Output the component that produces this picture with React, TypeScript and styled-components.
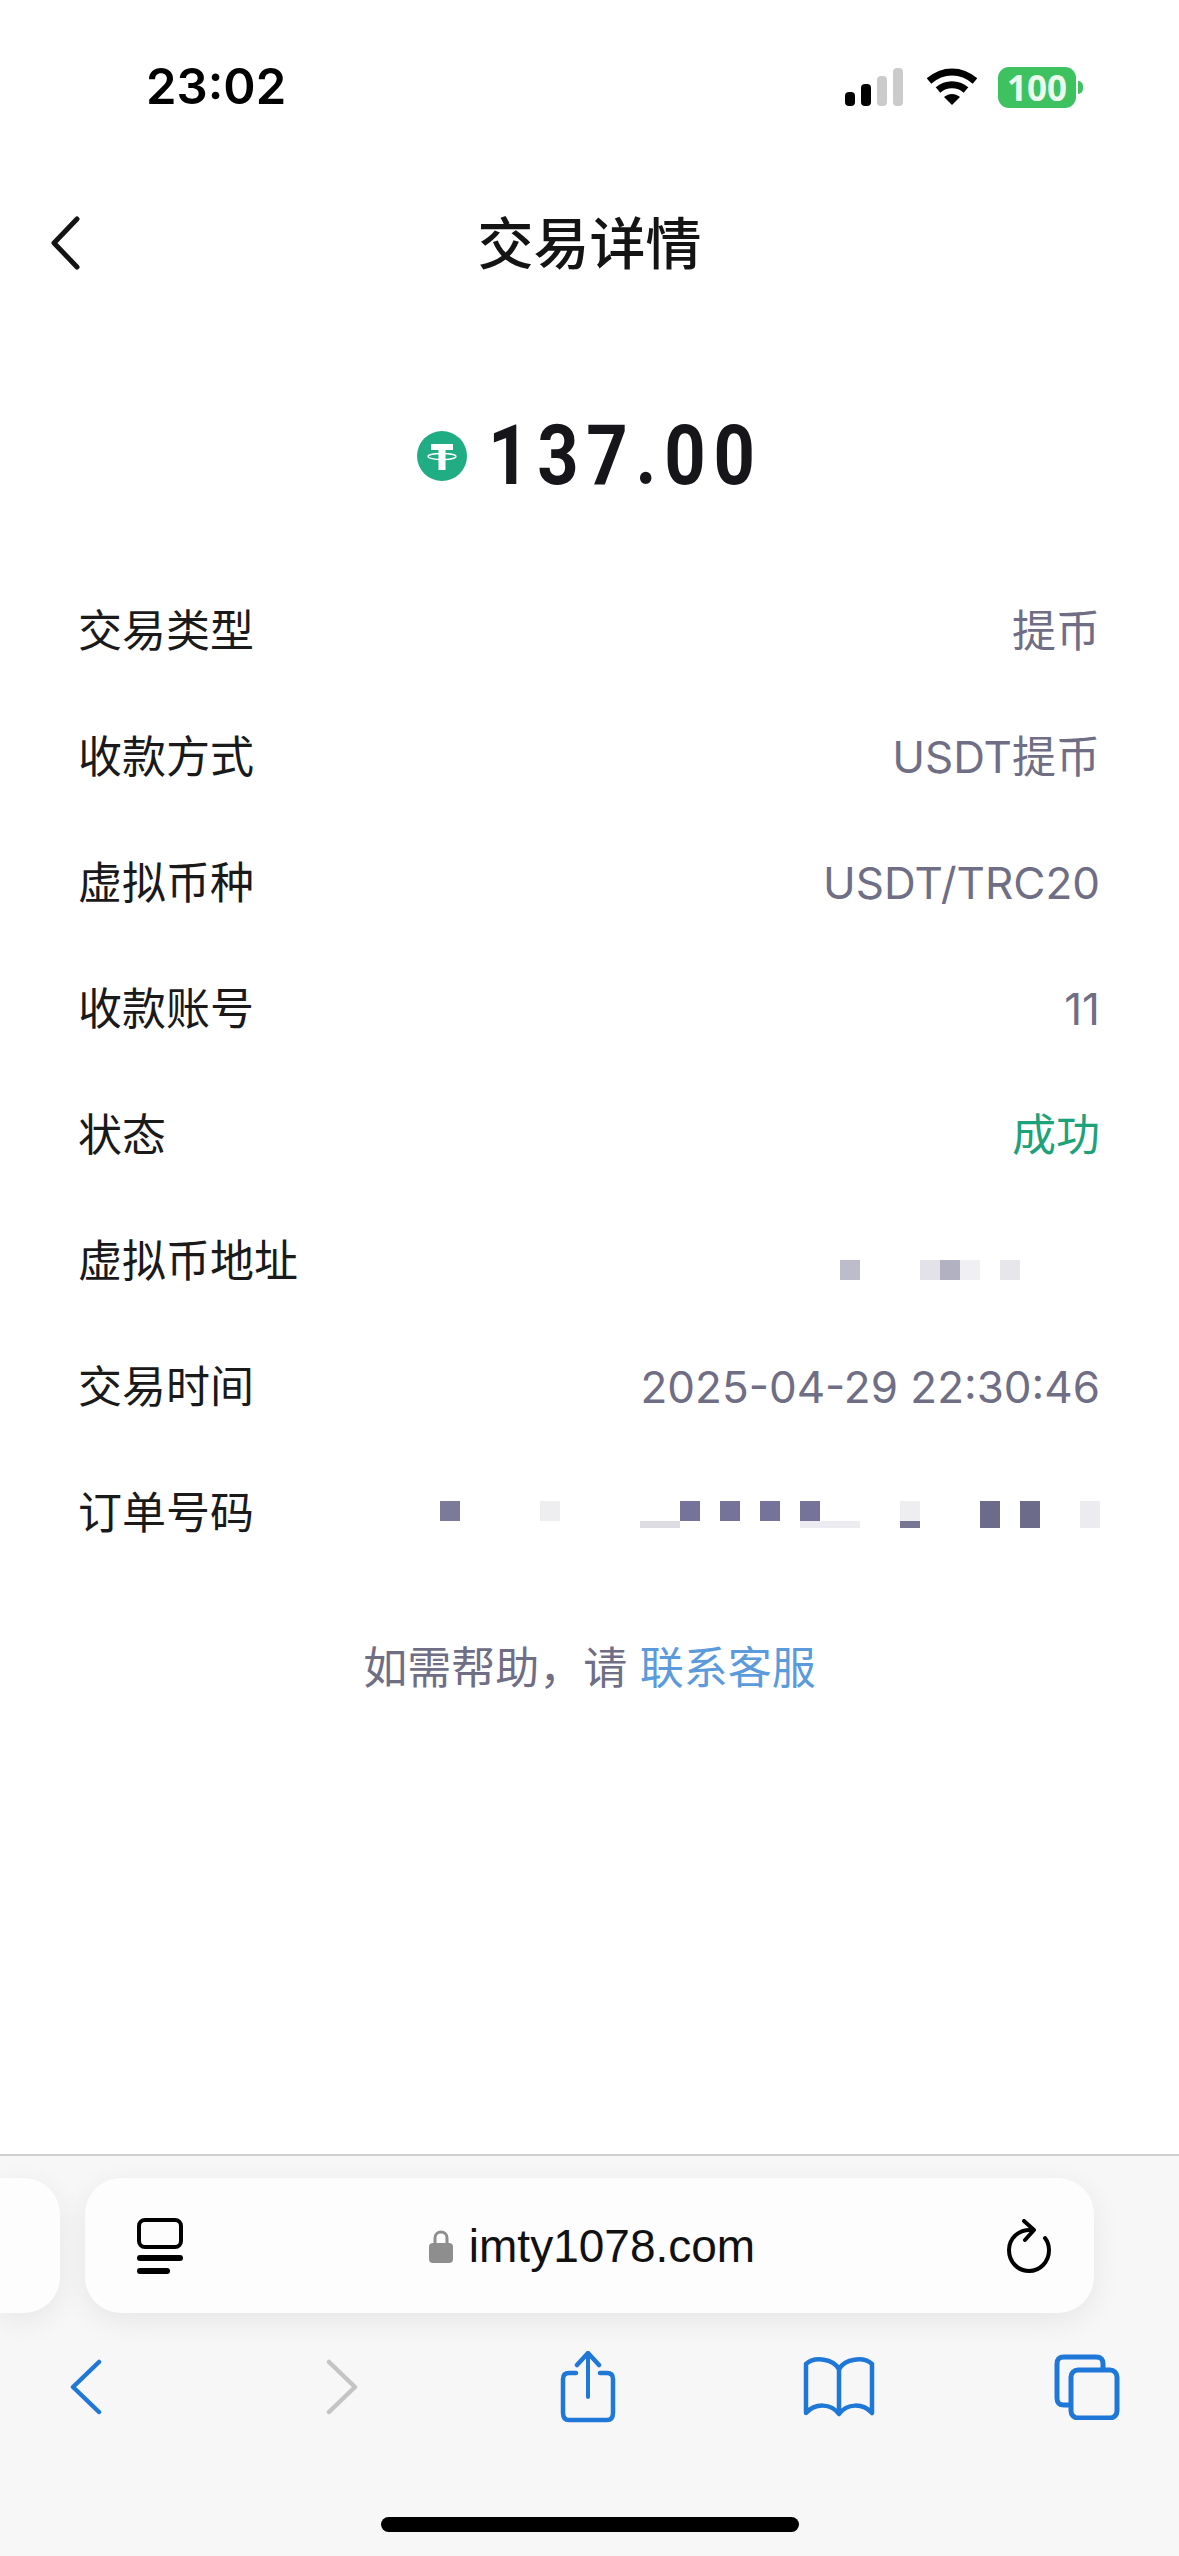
import React from 'react';
import styled, { createGlobalStyle } from 'styled-components';

const GlobalStyle = createGlobalStyle`
  html, body {
    margin: 0;
    padding: 0;
    background: #ffffff;
  }
  * {
    box-sizing: border-box;
  }
`;

const CJK = `Inter, "Noto Sans CJK SC", sans-serif`;

const Page = styled.div`
  width: 1179px;
  height: 2556px;
  display: flex;
  flex-direction: column;
  background: #ffffff;
  font-family: ${CJK};
  overflow: hidden;
`;

const StatusBar = styled.div`
  height: 193px;
  padding: 60px 103px 0 146px;
  display: flex;
  justify-content: space-between;
  align-items: flex-start;
`;

const Time = styled.span`
  font-size: 49px;
  line-height: 54px;
  font-weight: 600;
  color: #000000;
`;

const StatusIcons = styled.div`
  display: flex;
  align-items: center;
  gap: 20px;
  height: 54px;
`;

const Battery = styled.div`
  position: relative;
  width: 78px;
  height: 41px;
  border-radius: 11px;
  background: #3ec15f;
  color: #eafbee;
  font-size: 35px;
  line-height: 41px;
  font-weight: 700;
  font-family: "Open Sans", sans-serif;
  text-align: center;

  &::after {
    content: '';
    position: absolute;
    right: -7px;
    top: 14px;
    width: 5px;
    height: 13px;
    border-radius: 0 6px 6px 0;
    background: #3ec15f;
  }
`;

const Header = styled.header`
  height: 100px;
  display: grid;
  grid-template-columns: 1fr auto 1fr;
  align-items: center;
  padding: 0 50px;
`;

const Title = styled.h1`
  margin: 2px 0 0;
  font-size: 56px;
  line-height: 98px;
  font-weight: 500;
  color: #141414;
`;

const Amount = styled.div`
  height: 275px;
  padding-top: 51px;
  display: flex;
  align-items: center;
  justify-content: center;
  gap: 21px;
`;

// digits in the reference are narrower than Roboto, with wide tracking
const AmountValue = styled.span`
  display: inline-block;
  font-family: Roboto, sans-serif;
  font-size: 84px;
  line-height: 90px;
  font-weight: 700;
  letter-spacing: 9px;
  color: #15151a;
  transform: scaleX(0.86);
  transform-origin: left center;
  margin-right: -46px;
`;

const Rows = styled.div`
  display: flex;
  flex-direction: column;
  padding: 0 79px 0 78px;
`;

const Row = styled.div`
  height: 126px;
  display: flex;
  align-items: center;
  justify-content: space-between;
`;

const Label = styled.span`
  font-size: 44px;
  line-height: 56px;
  color: #1a1a1a;
`;

const Value = styled.span<{ $success?: boolean }>`
  font-size: 44px;
  line-height: 56px;
  color: ${({ $success }) => ($success ? '#1ea27a' : '#6f6e85')};
`;

const Mosaic = styled.div<{ $cols: number; $offset: number }>`
  display: grid;
  grid-template-columns: repeat(${({ $cols }) => $cols}, 20px);
  grid-template-rows: 20px 7px;
  margin-top: ${({ $offset }) => $offset}px;
`;

const MosaicCell = styled.span<{ $col: number; $row: number; $span?: number; $tall?: boolean; $color: string }>`
  grid-column: ${({ $col, $span }) => `${$col} / span ${$span ?? 1}`};
  grid-row: ${({ $row, $tall }) => `${$row} / span ${$tall ? 2 : 1}`};
  background: ${({ $color }) => $color};
`;

const HelpLine = styled.p`
  margin: 61px 0 0;
  text-align: center;
  font-size: 44px;
  line-height: 62px;
  color: #6f6e85;
`;

const HelpLink = styled.span`
  color: #5b9bdc;
`;

const Spacer = styled.div`
  flex: 1;
`;

const BrowserBar = styled.footer`
  height: 402px;
  background: #f7f7f8;
  border-top: 2px solid #cfcfd1;
  display: flex;
  flex-direction: column;
  padding-top: 22px;
`;

const PillRow = styled.div`
  display: flex;
  gap: 25px;
  height: 135px;
`;

const SidePill = styled.div`
  width: 60px;
  background: #fdfdfe;
  border-radius: 0 36px 36px 0;
  box-shadow: 0 8px 30px rgba(0, 0, 0, 0.07);
`;

const UrlPill = styled.div`
  width: 1009px;
  background: #fdfdfe;
  border-radius: 36px;
  box-shadow: 0 8px 30px rgba(0, 0, 0, 0.07);
  display: grid;
  grid-template-columns: 1fr auto 1fr;
  align-items: center;
  padding: 0 43px 0 52px;
`;

const PillStart = styled.div`
  display: flex;
  justify-content: flex-start;
`;

const PillEnd = styled.div`
  display: flex;
  justify-content: flex-end;
`;

const Address = styled.div`
  display: flex;
  align-items: center;
  gap: 16px;
  margin-right: 4px;
`;

const Domain = styled.span`
  font-family: "Liberation Sans", sans-serif;
  font-size: 46px;
  line-height: 60px;
  color: #111111;
`;

const Toolbar = styled.nav`
  height: 94px;
  margin-top: 27px;
  display: grid;
  grid-template-columns: 171px 342px 150px 352px 144px;
  align-items: center;
  justify-items: center;
`;

const HomeIndicator = styled.div`
  width: 418px;
  height: 15px;
  margin: 83px auto 0;
  border-radius: 8px;
  background: #000000;
`;

const BLUE = '#1f78d8';

const SignalIcon = () => (
  <svg width="62" height="38" viewBox="0 0 62 38">
    <rect x="1" y="24" width="10" height="14" rx="4" fill="#000" />
    <rect x="17" y="16" width="10" height="22" rx="4" fill="#000" />
    <rect x="33" y="8" width="10" height="30" rx="4" fill="#cbcbcb" />
    <rect x="49" y="0" width="10" height="38" rx="4" fill="#cbcbcb" />
  </svg>
);

const WifiIcon = () => (
  <svg width="52" height="38" viewBox="0 0 52 38">
    <path d="M3 13 C17 1 35 1 49 13" fill="none" stroke="#000" strokeWidth="7" />
    <path d="M12 22 C20 15 32 15 40 22" fill="none" stroke="#000" strokeWidth="7" />
    <path d="M18 29 C23 25 29 25 34 29 L26 37 Z" fill="#000" />
  </svg>
);

const TetherIcon = () => (
  <svg width="50" height="50" viewBox="0 0 50 50">
    <circle cx="25" cy="25" r="25" fill="#21ad84" />
    <path d="M14 13 H36 V19 H28.5 V39 H21.5 V19 H14 Z" fill="#fff" />
    <ellipse cx="25" cy="25.5" rx="14" ry="3" fill="none" stroke="#fff" strokeWidth="1.3" />
  </svg>
);

const BackIcon = () => (
  <svg width="30" height="54" viewBox="0 0 30 54">
    <path d="M27 3 L4 27 L27 51" fill="none" stroke="#141414" strokeWidth="5" strokeLinecap="round" strokeLinejoin="round" />
  </svg>
);

const TabGroupIcon = () => (
  <svg width="46" height="56" viewBox="0 0 46 56" fill="none" stroke="#000" strokeLinecap="round">
    <rect x="2" y="2" width="42" height="27" rx="6" strokeWidth="4" />
    <path d="M3 40 H43" strokeWidth="6" />
    <path d="M3 53 H30" strokeWidth="6" />
  </svg>
);

const LockIcon = () => (
  <svg width="24" height="34" viewBox="0 0 24 34">
    <path d="M6 16 V9 C6 1 18 1 18 9 V16" fill="none" stroke="#8e8e8e" strokeWidth="3" />
    <rect x="0" y="14" width="24" height="20" rx="4" fill="#8e8e8e" />
  </svg>
);

const ReloadIcon = () => (
  <svg width="44" height="54" viewBox="0 0 44 54" fill="none" stroke="#000" strokeWidth="4" strokeLinecap="round" strokeLinejoin="round">
    <path d="M25 11 C11 10 2 20 2 31 C2 43 11 52 22 52 C33 52 42 43 42 31 C42 26 41 23 38 19" />
    <path d="M17 2 L27 11 L18 21" />
  </svg>
);

const ToolbarBack = ({ color }: { color: string }) => (
  <svg width="32" height="56" viewBox="0 0 32 56">
    <path d="M29 3 L3 28 L29 53" fill="none" stroke={color} strokeWidth="4.5" strokeLinecap="round" strokeLinejoin="round" />
  </svg>
);

const ToolbarForward = ({ color }: { color: string }) => (
  <svg width="32" height="56" viewBox="0 0 32 56">
    <path d="M3 3 L29 28 L3 53" fill="none" stroke={color} strokeWidth="4.5" strokeLinecap="round" strokeLinejoin="round" />
  </svg>
);

const ShareIcon = () => (
  <svg width="56" height="72" viewBox="0 0 56 72" fill="none" stroke={BLUE} strokeWidth="4.5" strokeLinecap="round" strokeLinejoin="round">
    <path d="M16 22 H9 C5 22 3 24 3 28 V62 C3 67 5 69 9 69 H47 C51 69 53 67 53 62 V28 C53 24 51 22 47 22 H40" />
    <path d="M28 46 V3" strokeWidth="4" />
    <path d="M17 14 L28 2 L39 14" />
  </svg>
);

const BookIcon = () => (
  <svg width="72" height="60" viewBox="0 0 72 60" fill="none" stroke={BLUE} strokeWidth="4.5" strokeLinecap="round" strokeLinejoin="round">
    <path d="M36 12 C30 2 12 -1 3 7 V56 C12 46 28 46 36 57 C44 46 60 46 69 56 V7 C60 -1 42 2 36 12 Z" />
    <path d="M36 12 V54" />
  </svg>
);

const TabsIcon = () => (
  <svg width="66" height="66" viewBox="0 0 66 66" fill="none" stroke={BLUE} strokeWidth="5" strokeLinejoin="round">
    <path d="M15 51 H10 C5 51 3 49 3 44 V10 C3 5 5 3 10 3 H42 C47 3 49 5 49 10 V16" />
    <rect x="17" y="16" width="46" height="48" rx="7" />
  </svg>
);

interface CellData {
  col: number;
  row: number;
  span?: number;
  tall?: boolean;
  color: string;
}

const addressCells: CellData[] = [
  { col: 1, row: 1, color: '#bdbccb' },
  { col: 5, row: 1, color: '#e2e2e8' },
  { col: 6, row: 1, color: '#b2b1c2' },
  { col: 7, row: 1, color: '#f0f0f3' },
  { col: 9, row: 1, color: '#e6e6eb' },
];

const orderCells: CellData[] = [
  { col: 1, row: 1, color: '#7c7a99' },
  { col: 6, row: 1, color: '#eeeef1' },
  { col: 11, row: 2, span: 2, color: '#dcdce2' },
  { col: 13, row: 1, color: '#75739a' },
  { col: 15, row: 1, color: '#75739a' },
  { col: 17, row: 1, color: '#75739a' },
  { col: 19, row: 1, color: '#75739a' },
  { col: 19, row: 2, span: 3, color: '#ececf0' },
  { col: 24, row: 1, color: '#eeeef1' },
  { col: 24, row: 2, color: '#777694' },
  { col: 28, row: 1, tall: true, color: '#6d6b8a' },
  { col: 30, row: 1, tall: true, color: '#6d6b8a' },
  { col: 33, row: 1, tall: true, color: '#ececf0' },
];

const renderCells = (cells: CellData[]) =>
  cells.map((cell) => (
    <MosaicCell
      key={`${cell.col}-${cell.row}`}
      $col={cell.col}
      $row={cell.row}
      $span={cell.span}
      $tall={cell.tall}
      $color={cell.color}
    />
  ));

const App: React.FC = () => {
  return (
    <Page>
      <GlobalStyle />
      <StatusBar>
        <Time>23:02</Time>
        <StatusIcons>
          <SignalIcon />
          <WifiIcon />
          <Battery>100</Battery>
        </StatusIcons>
      </StatusBar>

      <Header>
        <BackIcon />
        <Title>交易详情</Title>
      </Header>

      <Amount>
        <TetherIcon />
        <AmountValue>137.00</AmountValue>
      </Amount>

      <Rows>
        <Row>
          <Label>交易类型</Label>
          <Value>提币</Value>
        </Row>
        <Row>
          <Label>收款方式</Label>
          <Value>USDT提币</Value>
        </Row>
        <Row>
          <Label>虚拟币种</Label>
          <Value>USDT/TRC20</Value>
        </Row>
        <Row>
          <Label>收款账号</Label>
          <Value>11</Value>
        </Row>
        <Row>
          <Label>状态</Label>
          <Value $success>成功</Value>
        </Row>
        <Row>
          <Label>虚拟币地址</Label>
          <Mosaic $cols={13} $offset={25}>{renderCells(addressCells)}</Mosaic>
        </Row>
        <Row>
          <Label>交易时间</Label>
          <Value>2025-04-29 22:30:46</Value>
        </Row>
        <Row>
          <Label>订单号码</Label>
          <Mosaic $cols={33} $offset={3}>{renderCells(orderCells)}</Mosaic>
        </Row>
      </Rows>

      <HelpLine>
        如需帮助，请 <HelpLink>联系客服</HelpLink>
      </HelpLine>

      <Spacer />

      <BrowserBar>
        <PillRow>
          <SidePill />
          <UrlPill>
            <PillStart>
              <TabGroupIcon />
            </PillStart>
            <Address>
              <LockIcon />
              <Domain>imty1078.com</Domain>
            </Address>
            <PillEnd>
              <ReloadIcon />
            </PillEnd>
          </UrlPill>
        </PillRow>
        <Toolbar>
          <ToolbarBack color={BLUE} />
          <ToolbarForward color="#c4c4c4" />
          <ShareIcon />
          <BookIcon />
          <TabsIcon />
        </Toolbar>
        <HomeIndicator />
      </BrowserBar>
    </Page>
  );
};

export default App;
